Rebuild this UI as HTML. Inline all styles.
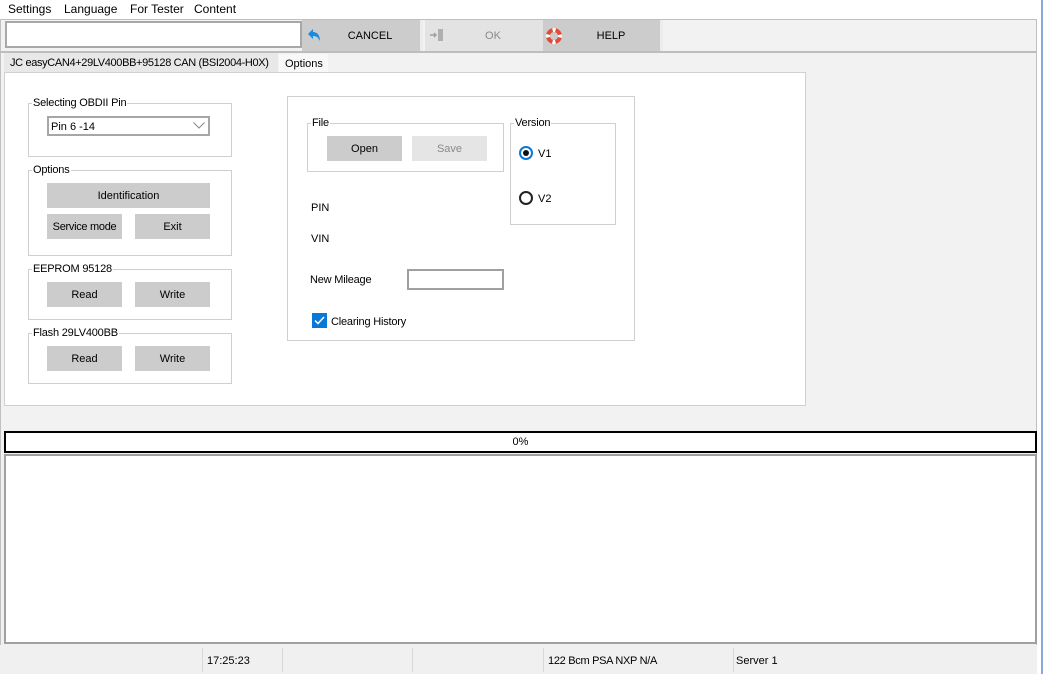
<!DOCTYPE html>
<html><head><style>
*{box-sizing:border-box;margin:0;padding:0}
body{width:1043px;height:674px;background:#fff;font-family:"Liberation Sans",sans-serif;font-size:11px;color:#000;position:relative;overflow:hidden;white-space:nowrap}
.a{position:absolute}
.btn{position:absolute;background:#cccccc;text-align:center;font-size:11px;line-height:26px;height:25px}
.grp{position:absolute;border:1px solid #cfcfcf}
.lg{position:absolute;top:-7px;left:3px;background:#fff;padding:0 1px;font-size:11px;letter-spacing:-0.2px}
</style></head><body>
<div class="a" style="left:0;top:0;width:1037px;height:19px;background:#fff;font-size:12px;">
<span class="a" style="left:8px;top:2px">Settings</span>
<span class="a" style="left:64px;top:2px">Language</span>
<span class="a" style="left:130px;top:2px">For Tester</span>
<span class="a" style="left:194px;top:2px">Content</span>
</div>
<div class="a" style="left:0;top:19px;width:1037px;height:34px;background:#f2f2f2;border:1px solid #c0c0c0;border-bottom:2px solid #bdbdbd"></div>
<div class="a" style="left:5px;top:21px;width:297px;height:27px;background:#fff;border:2px solid #a8a8a8"></div>
<div class="a" style="left:302px;top:20px;width:118px;height:31px;background:#cccccc"></div>
<svg class="a" style="left:307px;top:28px" width="14" height="14" viewBox="0 0 14 14"><path d="M1 6 L6 1 L6 4 C10 4 13 7 13 13 C11 9 9 8 6 8 L6 11 Z" fill="#1a8ce0"/></svg>
<div class="a" style="left:320px;top:30px;width:100px;text-align:center;font-size:11px">CANCEL</div>
<div class="a" style="left:420px;top:20px;width:3px;height:31px;background:#ececec"></div>
<div class="a" style="left:425px;top:20px;width:118px;height:31px;background:#e3e3e3"></div>
<svg class="a" style="left:429px;top:27px" width="16" height="16" viewBox="0 0 16 16"><path d="M1 8h6M5 6l2 2-2 2" stroke="#a0a0a0" stroke-width="1.5" fill="none"/><rect x="9" y="2" width="5" height="12" fill="#b0b0b0"/></svg>
<div class="a" style="left:443px;top:30px;width:100px;text-align:center;color:#8c8c8c">OK</div>
<div class="a" style="left:543px;top:20px;width:117px;height:31px;background:#cccccc"></div>
<div class="a" style="left:660px;top:20px;width:3px;height:31px;background:#ececec"></div>
<svg class="a" style="left:545px;top:27px" width="18" height="18" viewBox="0 0 18 18"><circle cx="9" cy="9" r="6" fill="none" stroke="#e24a3a" stroke-width="4"/><circle cx="9" cy="9" r="6" fill="none" stroke="#fff" stroke-width="4" stroke-dasharray="3 6.4" stroke-dashoffset="1.5"/></svg>
<div class="a" style="left:561px;top:30px;width:100px;text-align:center">HELP</div>
<div class="a" style="left:0;top:53px;width:1037px;height:377px;background:#f2f2f2;border-left:1px solid #c0c0c0;border-right:1px solid #c0c0c0"></div>
<div class="a" style="left:4px;top:53px;width:274px;height:19px;background:#e8e8e8;font-size:11px;letter-spacing:-0.35px;padding:4px 0 0 6px;overflow:hidden">JC easyCAN4+29LV400BB+95128 CAN (BSI2004-H0X)</div>
<div class="a" style="left:279px;top:54px;width:49px;height:18px;background:#f8f8f8;font-size:11px;padding:4px 0 0 6px">Options</div>
<div class="a" style="left:4px;top:72px;width:802px;height:334px;background:#fff;border:1px solid #d0d0d0"></div>
<div class="grp" style="left:28px;top:103px;width:204px;height:54px"><span class="lg">Selecting OBDII Pin</span></div>
<div class="a" style="left:47px;top:116px;width:163px;height:20px;border:2px solid #a6a6a6;background:#fff;padding:3px 0 0 2px">Pin 6 -14</div>
<svg class="a" style="left:193px;top:122px" width="12" height="7"><path d="M0.5 0.5L6 6 11.5 0.5" stroke="#888" fill="none"/></svg>
<div class="grp" style="left:28px;top:170px;width:204px;height:86px"><span class="lg">Options</span></div>
<div class="btn" style="left:47px;top:183px;width:163px">Identification</div>
<div class="btn" style="left:47px;top:214px;width:75px;letter-spacing:-0.3px">Service mode</div>
<div class="btn" style="left:135px;top:214px;width:75px">Exit</div>
<div class="grp" style="left:28px;top:269px;width:204px;height:51px"><span class="lg">EEPROM 95128</span></div>
<div class="btn" style="left:47px;top:282px;width:75px">Read</div>
<div class="btn" style="left:135px;top:282px;width:75px">Write</div>
<div class="grp" style="left:28px;top:333px;width:204px;height:51px"><span class="lg">Flash 29LV400BB</span></div>
<div class="btn" style="left:47px;top:346px;width:75px">Read</div>
<div class="btn" style="left:135px;top:346px;width:75px">Write</div>
<div class="grp" style="left:287px;top:96px;width:348px;height:245px"></div>
<div class="grp" style="left:307px;top:123px;width:197px;height:49px"><span class="lg">File</span></div>
<div class="btn" style="left:327px;top:136px;width:75px">Open</div>
<div class="btn" style="left:412px;top:136px;width:75px;background:#e5e5e5;color:#8a8a8a">Save</div>
<div class="grp" style="left:510px;top:123px;width:106px;height:102px"><span class="lg">Version</span></div>
<div class="a" style="left:519px;top:146px;width:14px;height:14px;border:2px solid #0a78d7;border-radius:50%;background:#fff"></div>
<div class="a" style="left:523px;top:150px;width:6px;height:6px;border-radius:50%;background:#111"></div>
<div class="a" style="left:538px;top:148px">V1</div>
<div class="a" style="left:519px;top:191px;width:14px;height:14px;border:2px solid #222;border-radius:50%;background:#fff"></div>
<div class="a" style="left:538px;top:193px">V2</div>
<div class="a" style="left:311px;top:202px">PIN</div>
<div class="a" style="left:311px;top:233px">VIN</div>
<div class="a" style="left:310px;top:274px;letter-spacing:-0.2px">New Mileage</div>
<div class="a" style="left:407px;top:269px;width:97px;height:21px;border:2px solid #a0a0a0;background:#fff"></div>
<div class="a" style="left:312px;top:313px;width:15px;height:15px;background:#0a78d7"></div>
<svg class="a" style="left:312px;top:313px" width="15" height="15"><path d="M3 7.5L6 10.5 12 4" stroke="#fff" stroke-width="1.5" fill="none"/></svg>
<div class="a" style="left:331px;top:316px;letter-spacing:-0.2px">Clearing History</div>
<div class="a" style="left:0;top:430px;width:1037px;height:244px;background:#f0f0f0;border-left:1px solid #c0c0c0;border-right:1px solid #c0c0c0"></div>
<div class="a" style="left:4px;top:431px;width:1033px;height:22px;background:#fff;border:2px solid #000;text-align:center;font-size:11px;line-height:19px">0%</div>
<div class="a" style="left:4px;top:454px;width:1033px;height:190px;background:#fff;border:2px solid #a0a0a0"></div>
<div class="a" style="left:0;top:645px;width:1037px;height:29px;background:#f0f0f0;font-size:11px">
<div class="a" style="left:202px;top:3px;width:1px;height:24px;background:#d8d8d8"></div>
<div class="a" style="left:282px;top:3px;width:1px;height:24px;background:#d8d8d8"></div>
<div class="a" style="left:412px;top:3px;width:1px;height:24px;background:#d8d8d8"></div>
<div class="a" style="left:543px;top:3px;width:1px;height:24px;background:#d8d8d8"></div>
<div class="a" style="left:733px;top:3px;width:1px;height:24px;background:#d8d8d8"></div>
<span class="a" style="left:207px;top:10px">17:25:23</span>
<span class="a" style="left:548px;top:10px;letter-spacing:-0.3px">122 Bcm PSA NXP N/A</span>
<span class="a" style="left:736px;top:10px">Server 1</span>
</div>
<div class="a" style="left:1041px;top:0;width:2px;height:674px;background:#8aa9d6"></div>
</body></html>
